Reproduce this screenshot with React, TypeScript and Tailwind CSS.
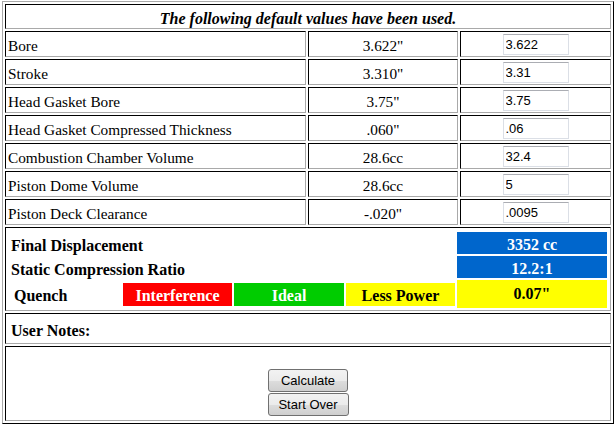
import { useState } from "react";

const ROWS = [
  { label: "Bore", def: '3.622"', value: "3.622" },
  { label: "Stroke", def: '3.310"', value: "3.31" },
  { label: "Head Gasket Bore", def: '3.75"', value: "3.75" },
  { label: "Head Gasket Compressed Thickness", def: '.060"', value: ".06" },
  { label: "Combustion Chamber Volume", def: "28.6cc", value: "32.4" },
  { label: "Piston Dome Volume", def: "28.6cc", value: "5" },
  { label: "Piston Deck Clearance", def: '-.020"', value: ".0095" },
];

const serif = "font-[family-name:Liberation_Serif,Times_New_Roman,serif] text-[16px] text-black";
const sans = "font-[family-name:Liberation_Sans,Arial,sans-serif]";

// classic border=1 table cell: dark top/left, light bottom/right
const cell =
  `border border-t-black border-l-black border-r-[#a9a9a9] border-b-[#a9a9a9] p-0 ${serif}`;

function Btn({ label, w }: { label: string; w: string }) {
  return (
    <button
      className={`${w} h-[23px] rounded-[3px] border border-[#707070] bg-[linear-gradient(#f2f2f2_0%,#ebebeb_50%,#dddddd_51%,#cfcfcf_100%)] text-[13px] leading-none text-black ${sans}`}
    >
      {label}
    </button>
  );
}

export default function App() {
  const [values, setValues] = useState(ROWS.map((r) => r.value));

  return (
    <div className={`bg-white w-[616px] h-[426px] pl-[2px] pt-[1px] ${serif}`}>
      <table className={`border-separate border-spacing-[2px] w-[612px] table-fixed border border-t-[#a9a9a9] border-l-[#a9a9a9] border-r-black border-b-black ${serif}`}>
        <colgroup>
          <col className="w-[301px]" />
          <col className="w-[150px]" />
          <col className="w-[151px]" />
        </colgroup>
        <tbody>
          <tr>
            <td colSpan={3} className={cell}>
              <div className="h-[23px] pt-[5px] flex items-center justify-center font-bold italic">
                The following default values have been used.
              </div>
            </td>
          </tr>

          {ROWS.map((r, i) => (
            <tr key={r.label}>
              <td className={cell}>
                <div className="h-[24px] pt-[4px] pl-[2px] flex items-center text-[15.3px]">{r.label}</div>
              </td>
              <td className={cell}>
                <div className="h-[24px] pt-[4px] flex items-center justify-center text-[15.3px]">{r.def}</div>
              </td>
              <td className={cell}>
                <div className="h-[24px] flex items-center justify-center">
                  <input
                    value={values[i]}
                    onChange={(e) => {
                      const next = [...values];
                      next[i] = e.target.value;
                      setValues(next);
                    }}
                    className={`w-[66px] h-[21px] px-[2px] border border-[#dbdfe6] border-t-[#abadb3] bg-white text-[13px] text-black outline-none ${sans}`}
                  />
                </div>
              </td>
            </tr>
          ))}

          {/* results */}
          <tr>
            <td colSpan={3} className={cell}>
              <div className="h-[82px] flex flex-col gap-[2px] pt-[4px] pb-[2px] pr-[3px] font-bold">
                <div className="flex items-center h-[22px]">
                  <span className="pl-[5px] pt-[5px] leading-[18px]">Final Displacement</span>
                  <div className="ml-auto w-[150px] h-[22px] pt-[4px] bg-[#0066cc] text-white flex items-center justify-center">
                    3352 cc
                  </div>
                </div>
                <div className="flex items-center h-[22px]">
                  <span className="pl-[5px] pt-[5px] leading-[18px]">Static Compression Ratio</span>
                  <div className="ml-auto w-[150px] h-[22px] pt-[4px] bg-[#0066cc] text-white flex items-center justify-center">
                    12.2:1
                  </div>
                </div>
                <div className="flex items-center h-[28px]">
                  <span className="pl-[8px] pt-[3px] leading-[18px] w-[117px]">Quench</span>
                  <div className="flex gap-[2px] pt-[1px]">
                    <div className="w-[109px] h-[23px] pt-[2px] bg-[#ff0000] text-white flex items-center justify-center">
                      Interference
                    </div>
                    <div className="w-[110px] h-[23px] pt-[2px] bg-[#00cc00] text-white flex items-center justify-center">
                      Ideal
                    </div>
                    <div className="w-[109px] h-[23px] pt-[2px] bg-[#ffff00] text-black flex items-center justify-center">
                      Less Power
                    </div>
                  </div>
                  <div className="ml-auto w-[150px] h-[28px] bg-[#ffff00] text-black flex items-center justify-center">
                    0.07"
                  </div>
                </div>
              </div>
            </td>
          </tr>

          <tr>
            <td colSpan={3} className={cell}>
              <div className="h-[29px] pt-[5px] pl-[5px] flex items-center font-bold">User Notes:</div>
            </td>
          </tr>

          <tr>
            <td colSpan={3} className={cell}>
              <div className="h-[73px] flex flex-col items-center gap-[1px] pt-[22px]">
                <Btn label="Calculate" w="w-[80px]" />
                <Btn label="Start Over" w="w-[81px]" />
              </div>
            </td>
          </tr>
        </tbody>
      </table>
    </div>
  );
}
